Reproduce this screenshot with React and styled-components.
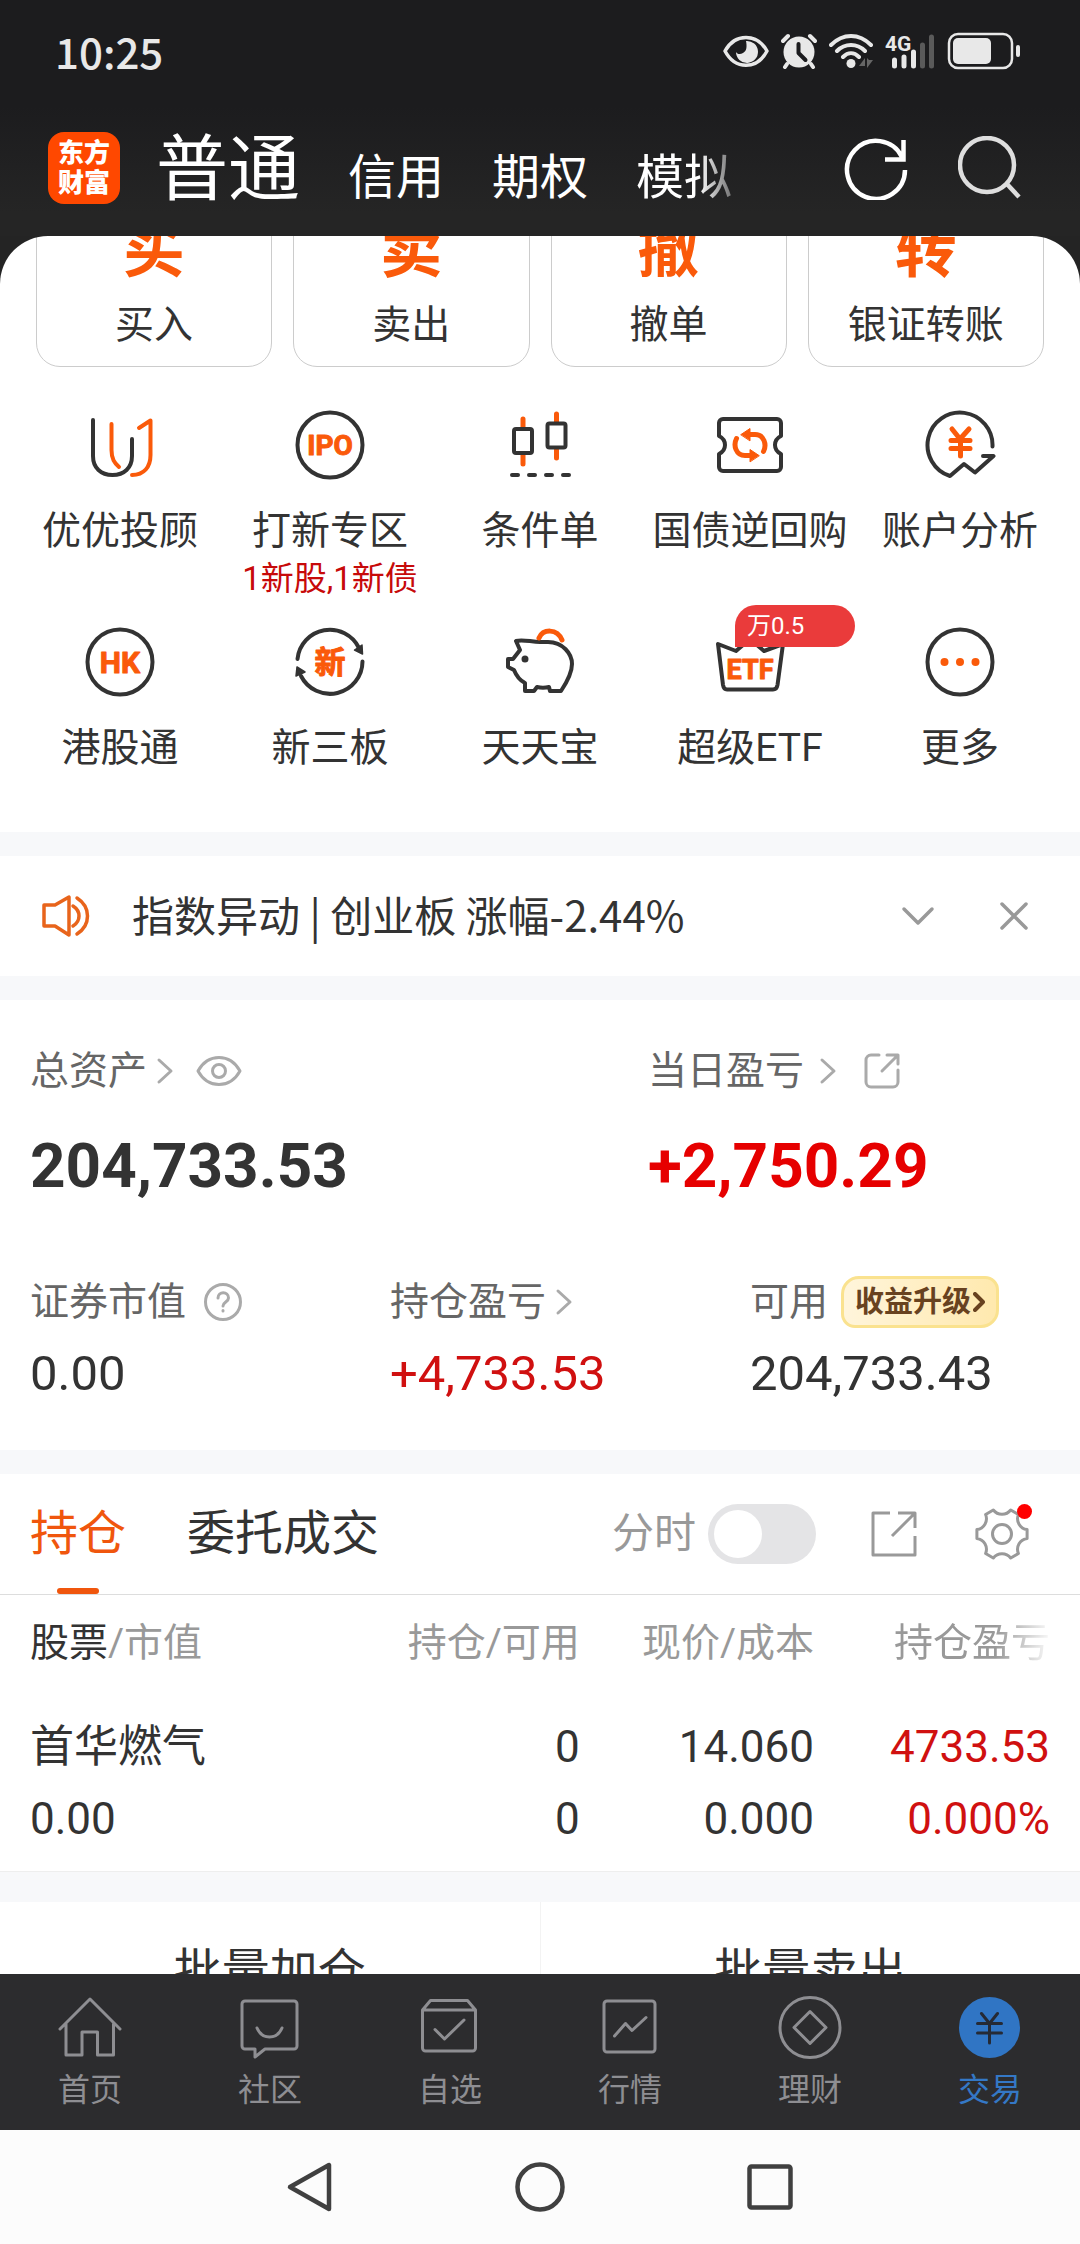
import React, { useState } from "react";
import styled, { createGlobalStyle, css } from "styled-components";

const ORANGE = "#fa5a0a";
const DARK = "#333";

const GlobalStyle = createGlobalStyle`
  * {
    box-sizing: border-box;
  }

  body {
    margin: 0;
    background: #fff;
    color: #333;
    font-family: Roboto, "Noto Sans CJK SC", sans-serif;
  }

  button {
    padding: 0;
    border: 0;
    background: none;
    color: inherit;
    font: inherit;
  }

  a {
    color: inherit;
    text-decoration: none;
  }

  svg {
    display: block;
    flex: none;
  }
`;

const Screen = styled.div`
  display: flex;
  flex-direction: column;
  height: 100vh;
  background: #242424;
`;

const Top = styled.header`
  flex: none;
  background: linear-gradient(#1c1c1e 45%, #252525 90%);
`;

const StatusBar = styled.div`
  display: flex;
  align-items: center;
  justify-content: space-between;
  height: 104px;
  padding: 0 59px 2px 55px;
  color: #e8e8e8;
  font-family: "Noto Sans CJK SC", sans-serif;
  font-size: 42px;
  font-weight: 500;
  line-height: 48px;
`;

const StatusIcons = styled.div`
  display: flex;
  align-items: center;
  gap: 12px;
`;

const TopNav = styled.div`
  display: flex;
  align-items: center;
  gap: 50px;
  height: 132px;
  padding: 0 58px 4px 48px;
  color: #fff;
`;

const Logo = styled.div`
  display: flex;
  align-items: center;
  justify-content: center;
  width: 72px;
  height: 72px;
  border-radius: 16px;
  background: #ff4800;
  font-size: 26px;
  font-weight: 900;
  line-height: 30px;
  text-align: center;
`;

const AccountTabs = styled.nav`
  display: flex;
  flex: 1;
  align-items: baseline;
  gap: 48px;
  margin-left: -14px;
  padding-top: 12px;
  line-height: 84px;
`;

const AccountTab = styled.button`
  font-size: ${(p) => (p.$active ? 72 : 48)}px;
  white-space: nowrap;
  ${(p) =>
    p.$fade &&
    css`
      mask-image: linear-gradient(90deg, #000 65%, transparent 120%);
    `}
`;

const Content = styled.main`
  flex: 1;
  min-height: 0;
  overflow: hidden auto;
  scrollbar-width: none;
  border-radius: 48px 48px 0 0;
  background: #f7f8fa;
`;

const Panel = styled.section`
  margin-bottom: 24px;
  background: #fff;
`;

const CardRow = styled.div`
  display: grid;
  grid-template-columns: repeat(4, 1fr);
  gap: 21px;
  margin-top: -39px;
  padding: 0 36px;
`;

const Card = styled.button`
  display: flex;
  flex-direction: column;
  align-items: center;
  gap: 18px;
  padding: 21px 0 17px;
  border: 1px solid #ccc;
  border-radius: 24px;
  font-size: 39px;
  line-height: 48px;
`;

const CardGlyph = styled.span`
  color: ${ORANGE};
  font-size: 62px;
  font-weight: 700;
  line-height: 64px;
`;

const Menu = styled.div`
  display: grid;
  grid-template-columns: repeat(5, 1fr);
  align-items: start;
  row-gap: 27px;
  padding: 42px 15px 60px;
`;

const MenuItem = styled.a`
  position: relative;
  display: flex;
  flex-direction: column;
  align-items: center;
  font-size: 39px;
  line-height: 48px;
  white-space: nowrap;

  svg {
    margin-bottom: 26px;
  }
`;

const MenuHint = styled.span`
  margin-top: 4px;
  color: #c70a0a;
  font-size: 33px;
  line-height: 40px;
`;

const MenuBadge = styled.span`
  position: absolute;
  top: -21px;
  right: 0;
  width: 120px;
  height: 42px;
  padding-left: 12px;
  border-radius: 21px 21px 21px 0;
  background: #ea3b3b;
  color: #fff;
  font-size: 24px;
  line-height: 42px;
`;

const IconText = styled.text`
  fill: ${ORANGE};
  stroke: ${ORANGE};
  stroke-width: 1;
  stroke-linejoin: round;
  font-weight: 700;
  text-anchor: middle;
`;

const Notice = styled(Panel)`
  display: flex;
  align-items: center;
  height: 120px;
  padding: 0 48px 0 42px;
  font-family: "Noto Sans CJK SC", sans-serif;
  font-size: 42px;
  line-height: 60px;
`;

const NoticeText = styled.span`
  flex: 1;
  padding: 0 0 4px 42px;
`;

const NoticeButtons = styled.div`
  display: flex;
  gap: 60px;
`;

const Assets = styled(Panel)`
  padding: 47px 0 48px;
`;

const AssetRow = styled.div`
  display: grid;
  grid-template-columns: ${(p) =>
    p.$main ? "618fr 462fr" : "repeat(3, 1fr)"};
  margin-bottom: ${(p) => (p.$main ? 74 : 0)}px;
`;

const Asset = styled.div`
  padding-left: 30px;
`;

const AssetLabel = styled.div`
  display: flex;
  align-items: center;
  height: ${(p) => (p.$main ? 48 : 52)}px;
  color: #666;
  font-size: 39px;
  line-height: 48px;
  white-space: nowrap;
`;

const LabelButton = styled.button`
  display: flex;
  align-items: center;
  margin-left: ${(p) => p.$gap}px;
`;

const AssetValue = styled.div`
  margin-top: ${(p) => (p.$main ? 35 : 18)}px;
  color: ${(p) => (p.$up ? (p.$main ? "#e60000" : "#d01010") : "#333")};
  font-size: ${(p) => (p.$main ? 62 : 49)}px;
  font-weight: ${(p) => (p.$main ? 700 : 400)};
  line-height: ${(p) => (p.$main ? 72 : 56)}px;
`;

const Upgrade = styled.button`
  display: flex;
  align-items: center;
  gap: 2px;
  height: 52px;
  margin-left: 13px;
  padding: 0 11px;
  border: 3px solid #fae28f;
  border-radius: 18px 14px 18px 14px;
  background: linear-gradient(90deg, #fff5db, #ffe9ae);
  color: #68421f;
  font-size: 29px;
  font-weight: 700;
`;

const HoldingTabs = styled.div`
  display: flex;
  align-items: center;
  height: 121px;
  padding: 0 50px 0 30px;
  border-bottom: 1px solid #ddd;
`;

const HoldingTab = styled.button`
  position: relative;
  margin-right: 61px;
  color: ${(p) => (p.$active ? "#f0560d" : "#333")};
  font-size: 48px;
  line-height: 120px;

  ${(p) =>
    p.$active &&
    css`
      &::after {
        content: "";
        position: absolute;
        bottom: 0;
        left: 50%;
        width: 42px;
        height: 6px;
        margin-left: -21px;
        border-radius: 3px;
        background: #f0560d;
      }
    `}
`;

const SwitchLabel = styled.label`
  display: flex;
  align-items: center;
  gap: 12px;
  margin: 0 54px 0 auto;
  color: #999;
  font-size: 42px;
  line-height: 60px;
`;

const Switch = styled.input`
  appearance: none;
  width: 108px;
  height: 60px;
  margin: 0;
  padding: 6px;
  border-radius: 30px;
  background: ${(p) => (p.checked ? "#f0560d" : "#e4e4e6")};

  &::before {
    content: "";
    display: block;
    width: 48px;
    height: 48px;
    margin-left: ${(p) => (p.checked ? 48 : 0)}px;
    border-radius: 50%;
    background: #fff;
  }
`;

const GearButton = styled.button`
  position: relative;
  margin-left: 56px;

  &::after {
    content: "";
    position: absolute;
    top: -3px;
    right: -2px;
    width: 15px;
    height: 15px;
    border-radius: 50%;
    background: #f00;
  }
`;

const Table = styled.table`
  width: 100%;
  border-collapse: collapse;
  border-bottom: 1px solid #eee;
  table-layout: fixed;
  white-space: nowrap;

  th,
  td {
    padding: 0;
    text-align: right;
  }

  th {
    height: 96px;
    color: #999;
    font-size: 39px;
    font-weight: 400;
    line-height: 48px;
  }

  th b {
    color: #333;
    font-weight: 400;
  }

  td {
    padding: 20px 0 16px;
    font-size: 44px;
    line-height: 72px;
  }

  th:first-child,
  td:first-child {
    width: 32%;
    padding-left: 30px;
    text-align: left;
  }

  th:last-child,
  td:last-child {
    width: 266px;
    padding-right: 30px;
  }
`;

const FadeText = styled.span`
  mask-image: linear-gradient(90deg, #000 65%, transparent 102%);
`;

const Line = styled.div`
  color: ${(p) => (p.$up ? "#d01010" : "#333")};
`;

const BatchRow = styled.div`
  display: flex;
  margin-top: 30px;
  background: #fff;
`;

const BatchButton = styled.button`
  flex: 1;
  font-size: 48px;
  line-height: 140px;

  & + & {
    border-left: 1px solid #f3f3f3;
  }
`;

const TabBar = styled.nav`
  display: grid;
  flex: none;
  grid-template-columns: repeat(6, 1fr);
  padding: 22px 0 20px;
  background: #2c2c2e;
`;

const TabItem = styled.a`
  display: flex;
  flex-direction: column;
  align-items: center;
  gap: 10px;
  color: ${(p) => (p.$active ? "#3478c6" : "#8e8e92")};
  font-size: 32px;
  line-height: 40px;
`;

const SystemBar = styled.div`
  display: flex;
  flex: none;
  align-items: center;
  justify-content: center;
  gap: 178px;
  height: 114px;
  background: #fcfcfc;
`;

function Stroke({ size, width = size, color = "currentColor", weight = 4, children }) {
  return (
    <svg
      width={width}
      height={size}
      viewBox={`0 0 ${width} ${size}`}
      fill="none"
      stroke={color}
      strokeWidth={weight}
      strokeLinecap="round"
      strokeLinejoin="round"
    >
      {children}
    </svg>
  );
}

function MenuIcon({ children }) {
  return (
    <Stroke size={72} color={DARK}>
      {children}
    </Stroke>
  );
}

function Chevron() {
  return (
    <Stroke size={28} width={18} color="#aaa" weight={3}>
      <path d="M3 3l12 11L3 25" />
    </Stroke>
  );
}

const menu = [
  {
    label: "优优投顾",
    icon: (
      <>
        <path d="M9 11v36c0 12 8 19 19.500 19S48 59 48 47V30" />
        <path stroke={ORANGE} d="M27.500 15v26c0 9 3 13 7.500 17" />
        <path stroke={ORANGE} d="M48 66c12 0 18.500-8 18.500-20V11.500L55 19" />
      </>
    ),
  },
  {
    label: "打新专区",
    hint: "1新股,1新债",
    icon: (
      <>
        <circle cx="36" cy="36" r="32.500" />
        <IconText x="36" y="46" fontSize="28">
          IPO
        </IconText>
      </>
    ),
  },
  {
    label: "条件单",
    icon: (
      <>
        <path
          stroke={ORANGE}
          strokeWidth="5"
          d="M19 10v8M19 46v9M52.500 5v8M52.500 41v8"
        />
        <rect x="10" y="20" width="18" height="24" rx="2" />
        <rect x="43.500" y="14.500" width="18" height="24" rx="2" />
        <path d="M8 66h6M25 66h6M42 66h6M59 66h6" />
      </>
    ),
  },
  {
    label: "国债逆回购",
    icon: (
      <>
        <path d="M5 14a4 4 0 0 1 4-4h54a4 4 0 0 1 4 4v13c-8 4-8 14 0 18v13a4 4 0 0 1-4 4H9a4 4 0 0 1-4-4V45c8-4 8-14 0-18z" />
        <g stroke={ORANGE} strokeWidth="5">
          <path d="M36 25.500h5c9 0 12 10 8.500 17M36 46.500h-5c-9 0-12-10-8.500-17" />
        </g>
        <path
          fill={ORANGE}
          stroke={ORANGE}
          strokeWidth="1"
          d="M27 25.500l9-6v12zM45 46.500l-9-6v12z"
        />
      </>
    ),
  },
  {
    label: "账户分析",
    icon: (
      <>
        <path d="M68.500 37.500A32.500 32.500 0 1 0 26 67l14-12 11 8.500L69.500 47H59" />
        <path
          stroke={ORANGE}
          strokeWidth="5"
          d="M28 20l8 10 9-10M27 31.500h19M27 39.500h19M36.500 31v16"
        />
      </>
    ),
  },
  {
    label: "港股通",
    icon: (
      <>
        <circle cx="36" cy="36" r="32.500" />
        <IconText x="36" y="47" fontSize="30">
          HK
        </IconText>
      </>
    ),
  },
  {
    label: "新三板",
    icon: (
      <>
        <path d="M3.500 33A32.500 32.500 0 0 1 65 22M68.500 35.500A32.500 32.500 0 0 1 7 50" />
        <path
          fill={DARK}
          strokeWidth="1.500"
          d="M68 19l.5 9-8-4zM3 41l-1 9 9-4z"
        />
        <IconText x="36" y="47" fontSize="31">
          新
        </IconText>
      </>
    ),
  },
  {
    label: "天天宝",
    icon: (
      <>
        <path d="M16 24l-4-9c7-2 15 1 24 1h8c15 0 24 12 24 22 0 8-3 15-11 27H46l-1-4c-4 1-8 1-12 0l-3 4h-9v-8c-6-3-9-8-11-13l-6-3V33h5z" />
        <path stroke={ORANGE} strokeWidth="5" d="M35 12c4-9 18-10 23 2" />
        <circle cx="21" cy="33" r="2" fill={DARK} strokeWidth="3" />
      </>
    ),
  },
  {
    label: "超级ETF",
    badge: "万0.5",
    icon: (
      <>
        <path d="M4 18l5 41c.5 3 2 4.500 4 4.500h46c2 0 4-1.500 4.500-4.500L69 18l-19 7-14-12-14 12z" />
        <IconText x="36" y="53" fontSize="27">
          ETF
        </IconText>
      </>
    ),
  },
  {
    label: "更多",
    icon: (
      <>
        <circle cx="36" cy="36" r="32.500" />
        <g fill={ORANGE} stroke="none">
          <circle cx="20.500" cy="36" r="4" />
          <circle cx="36" cy="36" r="4" />
          <circle cx="51.500" cy="36" r="4" />
        </g>
      </>
    ),
  },
];

const cards = [
  ["买", "买入"],
  ["卖", "卖出"],
  ["撤", "撤单"],
  ["转", "银证转账"],
];

const tabs = [
  {
    label: "首页",
    icon: (
      <path d="M2 33L32 3l30 30M8 28v31h16V36h15.500v23h16V28" />
    ),
  },
  {
    label: "社区",
    icon: (
      <>
        <path d="M7 5h49a3 3 0 0 1 3 3v42a3 3 0 0 1-3 3H27l-10 8v-8H7a3 3 0 0 1-3-3V8a3 3 0 0 1 3-3z" />
        <path d="M19 32c5 12 20 12 25 0" />
      </>
    ),
  },
  {
    label: "自选",
    icon: (
      <>
        <path d="M4.500 14l8-9.500h37l8 9.500v38a3 3 0 0 1-3 3h-47a3 3 0 0 1-3-3zM4.500 14h53" />
        <path d="M17 33.500l9.500 9.500L46 24" />
      </>
    ),
  },
  {
    label: "行情",
    icon: (
      <>
        <rect x="6" y="5" width="51" height="51" rx="3" />
        <path d="M16.500 40l11-12.500 6.500 7 14-13" />
      </>
    ),
  },
  {
    label: "理财",
    icon: (
      <>
        <circle cx="32" cy="31.500" r="30" />
        <path d="M32 15.500l16 16-16 16-16-16z" />
      </>
    ),
  },
  {
    label: "交易",
    icon: (
      <>
        <circle cx="31.500" cy="31.500" r="30.500" fill="#3075c4" stroke="none" />
        <path
          stroke="#252a35"
          d="M23.500 17.500l8 10 8-10M19.500 27.500h24M19.500 37h24M31.500 28v19"
        />
      </>
    ),
  },
];

const holdings = [
  {
    name: "首华燃气",
    value: "0.00",
    held: "0",
    available: "0",
    price: "14.060",
    cost: "0.000",
    profit: "4733.53",
    rate: "0.000%",
  },
];

// six flat teeth joined by concave arcs
const gearPoint = (deg) => {
  const a = (deg * Math.PI) / 180;
  return `${(28 + 25.5 * Math.cos(a)).toFixed(1)} ${(27 + 25.5 * Math.sin(a)).toFixed(1)}`;
};
const gearPath =
  [0, 60, 120, 180, 240, 300]
    .map(
      (deg) =>
        `${deg ? "" : `M${gearPoint(-10)}`}L${gearPoint(deg + 10)}A11 11 0 0 0 ${gearPoint(deg + 50)}`
    )
    .join("") + "Z";

function SystemStatus() {
  return (
    <StatusIcons>
      <Stroke size={34} width={46} weight={3.5}>
        <path d="M2 17C12-1 34-1 44 17 34 36 12 36 2 17z" />
        <path
          fill="currentColor"
          stroke="none"
          d="M23 7a11 11 0 1 1-10 11c1 2 4 3 7 1 4-2 4-7 3-12z"
        />
      </Stroke>
      <Stroke size={36} width={36} weight={4}>
        <circle cx="18" cy="19" r="15.500" fill="currentColor" stroke="none" />
        <path d="M2 8l5-5M34 8l-5-5M6 31l-2 3M30 31l2 3" />
        <path stroke="#1c1c1e" d="M17.500 11v9l7 7" />
      </Stroke>
      <Stroke size={36} width={44} weight={4}>
        <path d="M2 12c12-12 28-12 40 0M8 18c8-8 20-8 28 0M14 24c5-5 11-5 16 0" />
        <circle cx="22" cy="30.500" r="4.500" fill="currentColor" stroke="none" />
        <path
          fill="#666"
          stroke="none"
          d="M30 33l6-8v8zM38 25v10l6-8h-4z"
        />
      </Stroke>
      <Stroke size={36} width={50} weight={5}>
        <text
          x="0"
          y="18"
          fill="currentColor"
          stroke="none"
          fontFamily="Roboto"
          fontSize="21"
          fontWeight="700"
        >
          4G
        </text>
        <path d="M9.500 27v6M19 24v9M28.500 19v14" />
        <path stroke="#5a5a5a" d="M37.500 12v21M46.500 4v29" />
      </Stroke>
      <Stroke size={38} width={74} weight={2.5}>
        <rect x="2" y="2" width="63" height="34" rx="9" />
        <rect
          x="6"
          y="6"
          width="38"
          height="26"
          rx="5"
          fill="currentColor"
          stroke="none"
        />
        <path strokeWidth="4" d="M71 15v8" />
      </Stroke>
    </StatusIcons>
  );
}

function Header() {
  return (
    <Top>
      <StatusBar>
        <span>10:25</span>
        <SystemStatus />
      </StatusBar>
      <TopNav>
        <Logo>
          东方
          <br />
          财富
        </Logo>
        <AccountTabs>
          <AccountTab $active>普通</AccountTab>
          <AccountTab>信用</AccountTab>
          <AccountTab>期权</AccountTab>
          <AccountTab $fade>模拟</AccountTab>
        </AccountTabs>
        <button aria-label="刷新">
          <Stroke size={64} weight={4.5}>
            <path
              strokeLinecap="butt"
              d="M61 34A29 29 0 1 1 58 21M59.500 4v19.500H41"
              strokeLinejoin="miter"
            />
          </Stroke>
        </button>
        <button aria-label="搜索">
          <Stroke size={64} weight={4.5} color="#dedede">
            <circle cx="29" cy="29" r="27" />
            <path strokeLinecap="butt" d="M48 47l13 14" />
          </Stroke>
        </button>
      </TopNav>
    </Top>
  );
}

function AssetSummary() {
  return (
    <Assets>
      <AssetRow $main>
        <Asset>
          <AssetLabel $main>
            总资产
            <LabelButton $gap={9} aria-label="总资产详情">
              <Chevron />
            </LabelButton>
            <LabelButton $gap={22} aria-label="隐藏金额">
              <Stroke size={32} width={46} color="#aaa" weight={3}>
                <path d="M2 16c10-18 32-18 42 0-10 18-32 18-42 0z" />
                <circle cx="23" cy="16" r="6.500" />
              </Stroke>
            </LabelButton>
          </AssetLabel>
          <AssetValue $main>204,733.53</AssetValue>
        </Asset>
        <Asset>
          <AssetLabel $main>
            当日盈亏
            <LabelButton $gap={15} aria-label="当日盈亏详情">
              <Chevron />
            </LabelButton>
            <LabelButton $gap={27} aria-label="分享">
              <Stroke size={36} color="#aaa" weight={3}>
                <path d="M15 2H7a5 5 0 0 0-5 5v22a5 5 0 0 0 5 5h22a5 5 0 0 0 5-5V17M23 2h11v9M33 3L18 18" />
              </Stroke>
            </LabelButton>
          </AssetLabel>
          <AssetValue $main $up>
            +2,750.29
          </AssetValue>
        </Asset>
      </AssetRow>
      <AssetRow>
        <Asset>
          <AssetLabel>
            证券市值
            <LabelButton $gap={17} aria-label="证券市值说明">
              <Stroke size={40} color="#aaa" weight={3}>
                <circle cx="20" cy="20" r="17.500" />
                <path d="M15 16c0-7 10.500-7 10.500 0 0 4-5.500 4-5.500 8M20 28.500v.5" />
              </Stroke>
            </LabelButton>
          </AssetLabel>
          <AssetValue>0.00</AssetValue>
        </Asset>
        <Asset>
          <AssetLabel>
            持仓盈亏
            <LabelButton $gap={9} aria-label="持仓盈亏详情">
              <Chevron />
            </LabelButton>
          </AssetLabel>
          <AssetValue $up>+4,733.53</AssetValue>
        </Asset>
        <Asset>
          <AssetLabel>
            可用
            <Upgrade>
              收益升级
              <Stroke size={20} width={12} weight={4}>
                <path d="M2 2l8 8-8 8" />
              </Stroke>
            </Upgrade>
          </AssetLabel>
          <AssetValue>204,733.43</AssetValue>
        </Asset>
      </AssetRow>
    </Assets>
  );
}

function Holdings() {
  const [timeline, setTimeline] = useState(false);

  return (
    <Panel>
      <HoldingTabs>
        <HoldingTab $active>持仓</HoldingTab>
        <HoldingTab>委托成交</HoldingTab>
        <SwitchLabel>
          分时
          <Switch
            type="checkbox"
            checked={timeline}
            onChange={() => setTimeline(!timeline)}
          />
        </SwitchLabel>
        <button aria-label="导出">
          <Stroke size={48} color="#999" weight={3}>
            <path
              strokeLinecap="butt"
              d="M20 3H3v42h42V26M28 3h17v15M45 3L22 26"
            />
          </Stroke>
        </button>
        <GearButton aria-label="设置">
          <Stroke size={54} width={56} color="#999" weight={3}>
            <path d={gearPath} />
            <circle cx="28" cy="27" r="9.500" />
          </Stroke>
        </GearButton>
      </HoldingTabs>
      <Table>
        <thead>
          <tr>
            <th>
              <b>股票</b>/市值
            </th>
            <th>持仓/可用</th>
            <th>现价/成本</th>
            <th>
              <FadeText>持仓盈亏</FadeText>
            </th>
          </tr>
        </thead>
        <tbody>
          {holdings.map((h) => (
            <tr key={h.name}>
              <td>
                <Line>{h.name}</Line>
                <Line>{h.value}</Line>
              </td>
              <td>
                <Line>{h.held}</Line>
                <Line>{h.available}</Line>
              </td>
              <td>
                <Line>{h.price}</Line>
                <Line>{h.cost}</Line>
              </td>
              <td>
                <Line $up>{h.profit}</Line>
                <Line $up>{h.rate}</Line>
              </td>
            </tr>
          ))}
        </tbody>
      </Table>
    </Panel>
  );
}

function App() {
  return (
    <Screen>
      <GlobalStyle />
      <Header />
      <Content>
        <Panel>
          <CardRow>
            {cards.map(([glyph, label]) => (
              <Card key={label}>
                <CardGlyph>{glyph}</CardGlyph>
                {label}
              </Card>
            ))}
          </CardRow>
          <Menu>
            {menu.map((item) => (
              <MenuItem key={item.label} href="#">
                <MenuIcon>{item.icon}</MenuIcon>
                {item.label}
                {item.hint && <MenuHint>{item.hint}</MenuHint>}
                {item.badge && <MenuBadge>{item.badge}</MenuBadge>}
              </MenuItem>
            ))}
          </Menu>
        </Panel>

        <Notice>
          <Stroke size={48} color="#e8641b" weight={3.5}>
            <path d="M2 13h11l14-8v38l-14-9H2zM31 14c8 5 8 15 0 20M35 6c14 9 14 27 0 36" />
          </Stroke>
          <NoticeText>指数异动 | 创业板 涨幅-2.44%</NoticeText>
          <NoticeButtons>
            <button aria-label="展开">
              <Stroke size={36} color="#999" weight={3.5}>
                <path d="M4 11l14 14 14-14" />
              </Stroke>
            </button>
            <button aria-label="关闭">
              <Stroke size={36} color="#999" weight={3.5}>
                <path d="M6 6l24 24M30 6L6 30" />
              </Stroke>
            </button>
          </NoticeButtons>
        </Notice>

        <AssetSummary />
        <Holdings />

        <BatchRow>
          <BatchButton>批量加仓</BatchButton>
          <BatchButton>批量卖出</BatchButton>
        </BatchRow>
      </Content>

      <TabBar>
        {tabs.map((tab) => (
          <TabItem key={tab.label} href="#" $active={tab.label === "交易"}>
            <Stroke size={64} weight={3}>
              {tab.icon}
            </Stroke>
            {tab.label}
          </TabItem>
        ))}
      </TabBar>
      <SystemBar>
        <button aria-label="返回">
          <Stroke size={52} color="#404040" weight={4.5}>
            <path d="M45 4v44L6 26z" />
          </Stroke>
        </button>
        <button aria-label="主屏幕">
          <Stroke size={52} color="#404040" weight={4.5}>
            <circle cx="26" cy="26" r="22.500" />
          </Stroke>
        </button>
        <button aria-label="最近任务">
          <Stroke size={52} color="#404040" weight={4.5}>
            <rect x="5.500" y="5.500" width="41" height="41" rx="2" />
          </Stroke>
        </button>
      </SystemBar>
    </Screen>
  );
}

export default App;
